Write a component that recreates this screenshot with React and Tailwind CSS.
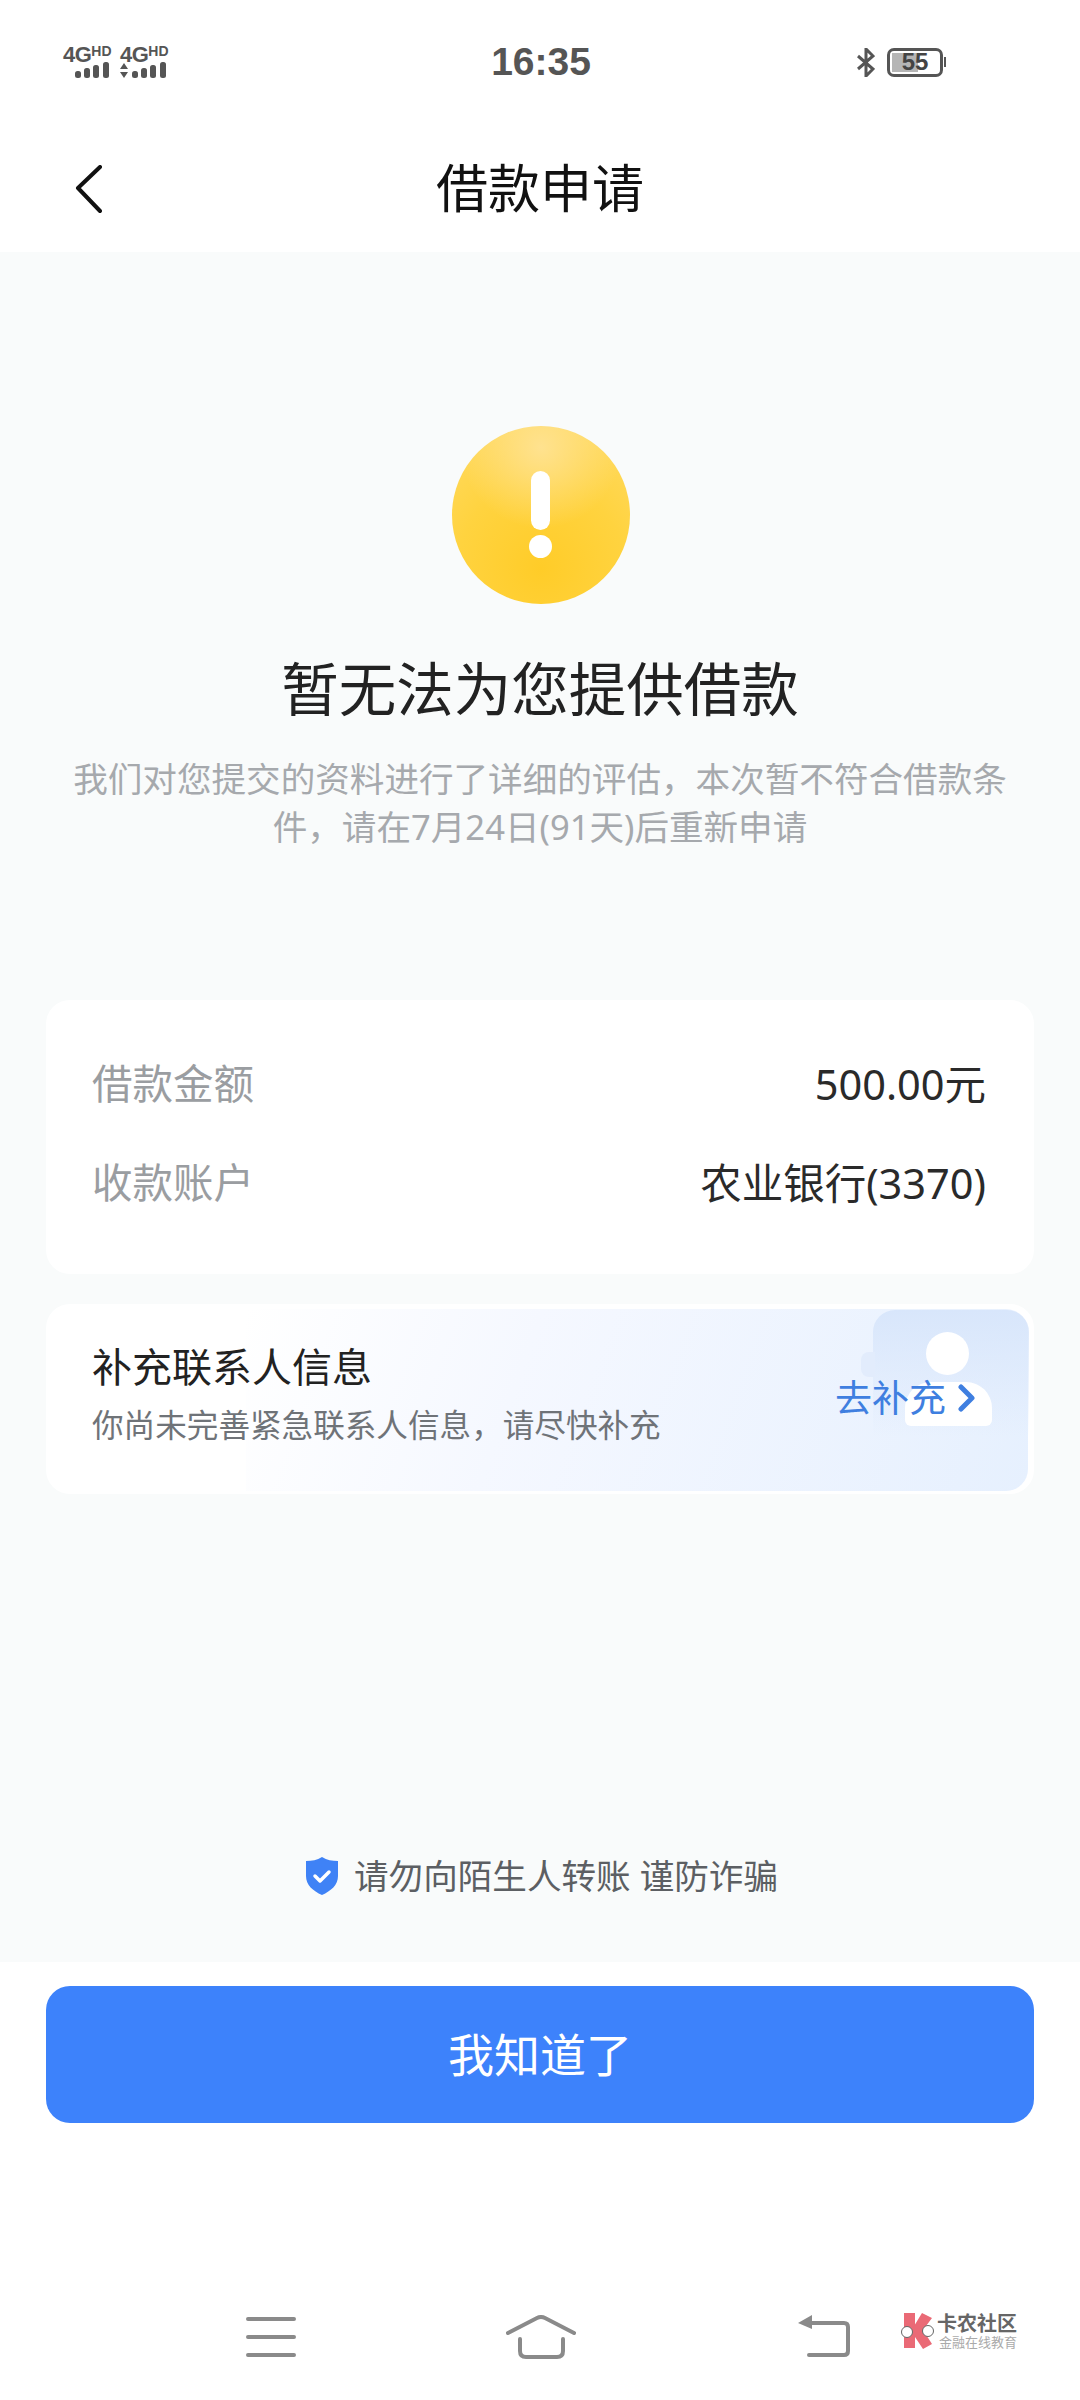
function Signal({ arrows }) {
  return (
    <div className="relative flex flex-col w-[46px] h-[32px]">
      <div className="flex items-start h-[16px] text-[#555] font-bold font-['Liberation_Sans',sans-serif]">
        <span className="text-[22px] leading-[17px] tracking-[-0.5px]">4G</span>
        <span className="text-[14px] leading-[11px] tracking-[0px]">HD</span>
      </div>
      <svg width="46" height="16" viewBox="0 0 46 16" fill="#555">
        {arrows && <path d="M4 1l4 6H0zM4 16l4-6H0z" />}
        <rect x="12" y="9" width="6" height="7" rx="2.5" />
        <rect x="21" y="6" width="6" height="10" rx="2.5" />
        <rect x="30" y="3" width="6" height="13" rx="2.5" />
        <rect x="40" y="0" width="6" height="16" rx="2.5" />
      </svg>
    </div>
  );
}

function Row({ label, value }) {
  return (
    <div className="flex items-center justify-between h-[60px]">
      <span className="text-[40.5px] text-[#9a9da1]">{label}</span>
      <span className="text-[41.5px] text-[#2a2a2a] mr-[2px]">{value}</span>
    </div>
  );
}

export default function App() {
  return (
    <div className="relative w-[1080px] h-[2400px] bg-white flex flex-col overflow-hidden font-['Noto_Sans','Noto_Sans_CJK_SC',sans-serif]">
      {/* status bar */}
      <div className="h-[124px] flex items-center pl-[63px]">
        <div className="flex gap-[11px] w-[427px]">
          <Signal />
          <Signal arrows />
        </div>
        <div className="w-[102px] text-center text-[39px] font-bold text-[#555] font-['Liberation_Sans',sans-serif]">16:35</div>
        <div className="flex items-center ml-[265px] gap-[12px]">
          <svg width="18" height="29" viewBox="0 0 18 29" fill="none" stroke="#555" strokeWidth="3">
            <path d="M1 8l15 13-7 7V1l7 7L1 21" />
          </svg>
          <div className="flex items-center">
            <div className="relative w-[56px] h-[29px] border-[3px] border-[#555] rounded-[7px] flex items-center justify-center">
              <div className="absolute left-[2px] top-[2px] bottom-[2px] w-[26px] bg-[#b5b5b5]" />
              <span className="relative text-[24px] leading-none font-bold text-[#444] font-['Liberation_Sans',sans-serif]">55</span>
            </div>
            <div className="w-[2px] h-[10px] ml-[1px] bg-[#555]" />
          </div>
        </div>
      </div>
      {/* header */}
      <div className="h-[128px] relative flex items-center justify-center">
        <svg className="absolute left-[74px] top-[41px]" width="30" height="50" viewBox="0 0 30 50" fill="none" stroke="#111" strokeWidth="4" strokeLinecap="round" strokeLinejoin="round">
          <path d="M26 3L4 24l22 23" transform="translate(0 -1)" />
        </svg>
        <h1 className="text-[52px] text-[#111] leading-none font-normal">借款申请</h1>
      </div>
      {/* main */}
      <main className="h-[1710px] bg-[#f9fbfb] flex flex-col items-center px-[46px] pt-[174px]">
        <div className="relative ml-[1px] w-[178px] h-[178px] rounded-full bg-[radial-gradient(circle_at_50%_12%,#ffe28f_0%,rgba(255,226,143,0)_45%),radial-gradient(circle_at_50%_80%,#ffcc28_0%,#ffd33f_50%,#ffdb66_100%)] flex flex-col items-center">
          <div className="w-[19px] h-[59px] mt-[45px] rounded-full bg-white" />
          <div className="w-[23px] h-[23px] mt-[5px] rounded-full bg-white" />
        </div>
        <h2 className="mt-[50px] text-[57.5px] leading-[70px] text-[#222] font-normal whitespace-nowrap">暂无法为您提供借款</h2>
        <p className="mt-[31px] w-[960px] text-center text-[34.6px] leading-[48px] text-[#a6a9ad]">
          我们对您提交的资料进行了详细的评估，本次暂不符合借款条件，请在7月24日(91天)后重新申请
        </p>
        <section className="mt-[149px] w-[988px] h-[274px] bg-white rounded-[24px] px-[46px] pt-[54px] flex flex-col gap-[39px]">
          <Row label="借款金额" value="500.00元" />
          <Row label="收款账户" value="农业银行(3370)" />
        </section>
        <section className="relative mt-[30px] w-[988px] h-[190px] bg-white rounded-[24px] overflow-hidden">
          <div className="absolute right-[6px] top-[5px] bottom-[3px] left-[200px] rounded-r-[22px] bg-[linear-gradient(110deg,#ffffff_0%,#f5f8ff_35%,#e6f0fe_100%)]" />
          <div className="absolute left-[827px] top-[6px] w-[156px] h-[181px] rounded-t-[22px] bg-[linear-gradient(180deg,#d8e6fb_0%,rgba(216,230,251,0)_70%)]" />
          <div className="absolute left-[815px] top-[48px] w-[14px] h-[25px] rounded-l-[8px] bg-[#e2ecfc]" />
          <div className="absolute left-[880px] top-[28px] w-[43px] h-[43px] rounded-full bg-white" />
          <div className="absolute left-[859px] top-[78px] w-[87px] h-[44px] rounded-t-[26px] rounded-b-[6px] bg-white" />
          <div className="relative flex items-center justify-between h-full pl-[46px] pr-[58px]">
            <div className="flex flex-col pb-[8px]">
              <div className="text-[40px] leading-[56px] text-[#222] -mt-[4px]">补充联系人信息</div>
              <div className="text-[31.6px] leading-[44px] text-[#6f7378] mt-[8px]">你尚未完善紧急联系人信息，请尽快补充</div>
            </div>
            <div className="flex items-center gap-[12px] -mt-[3px]">
              <span className="text-[37px] leading-[52px] text-[#3f7fe0]">去补充</span>
              <svg width="18" height="28" viewBox="0 0 18 28" fill="none" stroke="#3f7fe0" strokeWidth="5" strokeLinecap="round" strokeLinejoin="round">
                <path d="M3 3l11 11L3 25" />
              </svg>
            </div>
          </div>
        </section>
        <div className="mt-auto mb-[62px] ml-[4px] flex items-center gap-[16px]">
          <svg width="32" height="38" viewBox="0 0 32 38">
            <path d="M16 0c5 3 10 4 16 4v15c0 9-7 15-16 19C7 34 0 28 0 19V4c6 0 11-1 16-4z" fill="#3f82f6" />
            <path d="M9 19l5 5 9-9" fill="none" stroke="#fff" strokeWidth="3.5" strokeLinecap="round" strokeLinejoin="round" />
          </svg>
          <span className="text-[34.6px] leading-[48px] text-[#5c5f63] whitespace-pre">请勿向陌生人转账 谨防诈骗</span>
        </div>
      </main>
      {/* bottom */}
      <div className="flex-1 flex flex-col items-center pt-[24px]">
        <button className="w-[988px] h-[137px] rounded-[24px] bg-[#3d82fb] text-white text-[46px] flex items-center justify-center">我知道了</button>
        <nav className="mt-[192px] w-full flex items-start">
          <svg className="ml-[246px]" width="50" height="42" viewBox="0 0 50 42" stroke="#8a8a8a" strokeWidth="4" strokeLinecap="round">
            <path d="M2 4h46M2 22h46M2 40h46" />
          </svg>
          <svg className="ml-[210px]" width="70" height="44" viewBox="0 0 70 44" fill="none" stroke="#8a8a8a" strokeWidth="4" strokeLinecap="round" strokeLinejoin="round">
            <path d="M2 18L31 3Q35 1 39 3L68 18" />
            <path d="M14 24V36q0 6 6 6H51q6 0 6-6V24" />
          </svg>
          <svg className="ml-[222px]" width="52" height="42" viewBox="0 0 52 42" fill="none" stroke="#8a8a8a" strokeWidth="4" strokeLinecap="round" strokeLinejoin="round">
            <path d="M12 8H46q4 0 4 4V36q0 4-4 4H11" />
            <path d="M14 0V14L0 8z" fill="#8a8a8a" stroke="none" />
          </svg>
        </nav>
      </div>
      {/* watermark */}
      <div className="absolute left-[901px] top-[2313px] flex items-start gap-[3px]">
        <svg width="33" height="36" viewBox="0 0 33 36">
          <path d="M3 0h11v35H3z" fill="#ea6a76" />
          <path d="M21 0l10 5-9 12 9 14-9 5-12-18z" fill="#ea6a76" />
          <circle cx="6" cy="19" r="5.5" fill="#fff" stroke="#666" strokeWidth="1" />
          <circle cx="27" cy="18" r="5.5" fill="#fff" stroke="#666" strokeWidth="1" />
        </svg>
        <div className="flex flex-col items-start">
          <span className="text-[20px] leading-[21px] font-bold text-[#666] whitespace-nowrap">卡农社区</span>
          <span className="text-[13px] leading-[14px] text-[#aaa] whitespace-nowrap mt-[1px] ml-[2px]">金融在线教育</span>
        </div>
      </div>
    </div>
  );
}
